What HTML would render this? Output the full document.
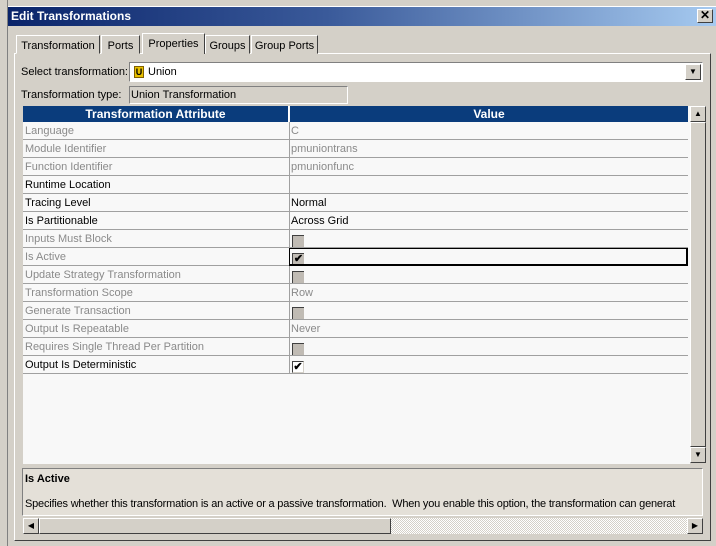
<!DOCTYPE html>
<html><head><style>
*{box-sizing:border-box;margin:0;padding:0}
body{width:716px;height:546px;background:#d4d0c8;position:relative;overflow:hidden;font-family:"Liberation Sans",sans-serif;font-size:11px;color:#000}
.a{position:absolute;white-space:nowrap}
.title{left:8px;top:7px;width:708px;height:19px;background:linear-gradient(90deg,#0a246a,#3a5a9a 45%,#a6caf0);color:#fff;font-weight:bold;font-size:12px;padding:2px 3px}
.close{right:3px;top:2px;width:16px;height:14px;background:#d4d0c8;border:1px solid;border-color:#fff #404040 #404040 #fff;color:#000;font-size:12px;line-height:11px;text-align:center;font-weight:bold}
.tab{top:35px;height:19px;border:1px solid;border-color:#fff #404040 #d4d0c8 #fff;padding:4px 0 0 0;text-align:center;background:#d4d0c8}
.panel{left:14px;top:53px;width:697px;height:488px;border:1px solid;border-color:#fff #404040 #404040 #fff}
.inp{border:1px solid;border-color:#808080 #fff #fff #808080}
.hdr{top:106px;height:17px;background:#0a3c7c;color:#fff;font-weight:bold;font-size:12px;text-align:center;line-height:16px;border-bottom:1px solid #000}
.row{left:23px;width:665px;height:18px;border-bottom:1px solid #a0a0a0;background:#f8f8f8}
.row span{position:absolute;top:3px}
.c1{left:2px}.c2{left:268px}
.row i{position:absolute;left:266px;top:0;width:1px;height:18px;background:#a0a0a0}
.g{color:#8a8a8a}
.cb{position:absolute;left:269px;top:5px;width:12px;height:12px;background:#c0bbb4;border-left:1px solid #404040;border-top:1px solid #404040;font-size:11px;line-height:10px;text-align:center}
.cbw{background:#fff;border:1px solid;border-color:#404040 #d4d0c8 #d4d0c8 #404040}
.btn{background:#d4d0c8;border:1px solid;border-color:#fff #404040 #404040 #fff;font-size:8px;text-align:center}
</style></head><body>
<div class="a" style="left:0;top:0;width:716px;height:7px;background:#d4d0c8;border-bottom:1px solid #fff"></div>
<div class="a" style="left:0;top:0;width:8px;height:546px;background:#d4d0c8;border-right:1px solid #808080"></div>
<div class="a title">Edit Transformations<div class="a close">✕</div></div>
<div class="a panel"></div>
<div class="a tab" style="left:16px;width:84px">Transformation</div>
<div class="a tab" style="left:101px;width:39px">Ports</div>
<div class="a tab" style="left:142px;top:33px;height:21px;width:63px;border-bottom:none">Properties</div>
<div class="a tab" style="left:205px;width:45px">Groups</div>
<div class="a tab" style="left:251px;width:67px">Group Ports</div>
<div class="a" style="left:21px;top:66px">Select transformation:</div>
<div class="a inp" style="left:129px;top:62px;width:574px;height:20px;background:#fff">
 <span class="a" style="left:4px;top:3px;width:10px;height:12px;background:#e8c000;border:1px solid #806000;font-size:9px;line-height:10px;text-align:center;font-weight:bold">U</span>
 <span class="a" style="left:18px;top:3px">Union</span>
 <div class="a btn" style="right:1px;top:1px;width:16px;height:16px;line-height:14px">▼</div>
</div>
<div class="a" style="left:21px;top:89px">Transformation type:</div>
<div class="a inp" style="left:129px;top:86px;width:219px;height:18px;padding:2px 1px">Union Transformation</div>
<div class="a" style="left:23px;top:106px;width:667px;height:358px;background:#f8f8f8"></div>
<div class="a hdr" style="left:23px;width:266px;border-right:1px solid #fff">Transformation Attribute</div>
<div class="a hdr" style="left:290px;width:398px">Value</div>
<div class="a row g" style="top:122px"><span class="c1">Language</span><i></i><span class="c2">C</span></div>
<div class="a row g" style="top:140px"><span class="c1">Module Identifier</span><i></i><span class="c2">pmuniontrans</span></div>
<div class="a row g" style="top:158px"><span class="c1">Function Identifier</span><i></i><span class="c2">pmunionfunc</span></div>
<div class="a row" style="top:176px"><span class="c1">Runtime Location</span><i></i></div>
<div class="a row" style="top:194px"><span class="c1">Tracing Level</span><i></i><span class="c2">Normal</span></div>
<div class="a row" style="top:212px"><span class="c1">Is Partitionable</span><i></i><span class="c2">Across Grid</span></div>
<div class="a row g" style="top:230px"><span class="c1">Inputs Must Block</span><i></i><b class="cb"></b></div>
<div class="a row g" style="top:248px"><span class="c1">Is Active</span><i></i><b class="cb" style="color:#000">✔</b></div>
<div class="a" style="left:289px;top:248px;width:399px;height:18px;border:2px solid #000;border-width:1px 2px 2px 1px"></div>
<div class="a row g" style="top:266px"><span class="c1">Update Strategy Transformation</span><i></i><b class="cb"></b></div>
<div class="a row g" style="top:284px"><span class="c1">Transformation Scope</span><i></i><span class="c2">Row</span></div>
<div class="a row g" style="top:302px"><span class="c1">Generate Transaction</span><i></i><b class="cb"></b></div>
<div class="a row g" style="top:320px"><span class="c1">Output Is Repeatable</span><i></i><span class="c2">Never</span></div>
<div class="a row g" style="top:338px"><span class="c1">Requires Single Thread Per Partition</span><i></i><b class="cb"></b></div>
<div class="a row" style="top:356px"><span class="c1">Output Is Deterministic</span><i></i><b class="cb cbw">✔</b></div>
<div class="a" style="left:690px;top:106px;width:16px;height:358px;background:#d4d0c8"></div>
<div class="a btn" style="left:690px;top:106px;width:16px;height:16px;line-height:14px">▲</div>
<div class="a btn" style="left:690px;top:122px;width:16px;height:325px"></div>
<div class="a btn" style="left:690px;top:447px;width:16px;height:16px;line-height:14px">▼</div>
<div class="a" style="left:22px;top:468px;width:681px;height:48px;background:#e4e0d8;border:1px solid;border-color:#808080 #fff #fff #808080"></div>
<div class="a" style="left:25px;top:473px;font-weight:bold">Is Active</div>
<div class="a" style="left:25px;top:498px;width:677px;overflow:hidden;letter-spacing:-0.2px">Specifies whether this transformation is an active or a passive transformation.&nbsp; When you enable this option, the transformation can generat</div>
<div class="a" style="left:23px;top:518px;width:680px;height:16px;background:repeating-conic-gradient(#d4d0c8 0 25%,#fff 0 50%) 0 0/2px 2px"></div>
<div class="a btn" style="left:23px;top:518px;width:16px;height:16px;line-height:14px">◀</div>
<div class="a btn" style="left:39px;top:518px;width:352px;height:16px"></div>
<div class="a btn" style="left:687px;top:518px;width:16px;height:16px;line-height:14px">▶</div>
</body></html>
